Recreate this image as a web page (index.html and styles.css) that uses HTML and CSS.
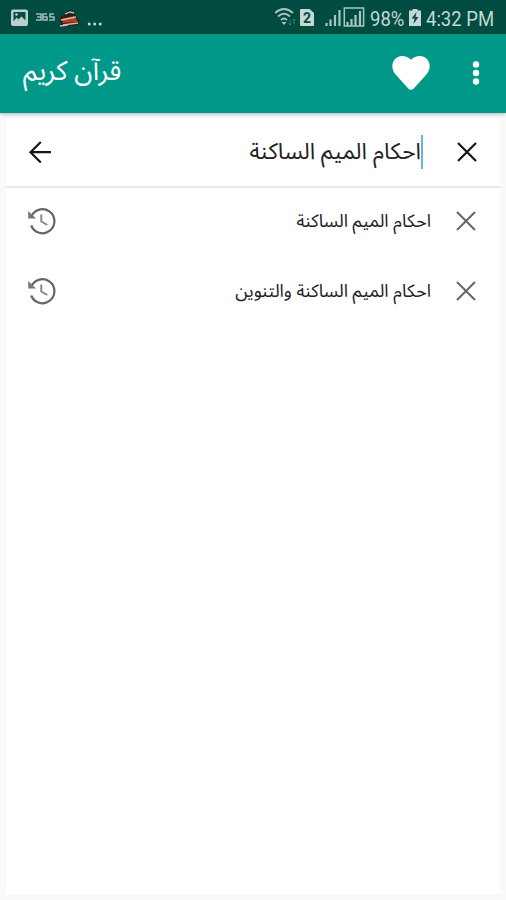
FILE: index.html
```html
<!DOCTYPE html>
<html lang="ar">
<head>
    <meta charset="utf-8">
    <title>قرآن كريم</title>
    <link rel="stylesheet" href="styles.css">
</head>
<body>
    <div class="status-bar">
        <svg class="status-left" width="70" height="34" viewBox="0 0 70 34">
            <!-- picture -->
            <rect x="11" y="9.500" width="17" height="16.500" rx="2" fill="#b9d0cb"/>
            <path d="M13.500 12h12v8.500l-4-4-3 3-2-2-3 4z" fill="#064c40"/>
            <circle cx="16.500" cy="14.500" r="1.300" fill="#b9d0cb"/>
            <!-- 365 badge -->
            <path d="M36 14h5v6h-5M37 17h4M47 14h-4v6h4v-3h-4M54 14h-4v3h4v3h-5" fill="none" stroke="#9db9b3" stroke-width="1.600"/>
        </svg>
        <svg class="cake" width="22" height="34" viewBox="0 0 22 34">
            <path d="M1 17l7-4 2-3 4 1 6 10-1 4-17 2z" fill="#311c18"/>
            <path d="M3 19l12-3 4 6-15 1z" fill="#a5432f"/>
            <path d="M2 20l15-3M4 25l15-2" stroke="#e9b48c" stroke-width="1.500"/>
            <path d="M6 14l5-2 4 1M1 26l8-1" stroke="#c9c0b4" stroke-width="1.300" fill="none"/>
        </svg>
        <svg width="16" height="34" viewBox="0 0 16 34" fill="#c5d8d4">
            <circle cx="2.200" cy="24" r="1.500"/>
            <circle cx="7.700" cy="24" r="1.500"/>
            <circle cx="13.200" cy="24" r="1.500"/>
        </svg>
        <svg class="status-right" width="92" height="34" viewBox="0 0 92 34">
            <!-- wifi -->
            <g fill="none" stroke="#a9c6bf" stroke-width="1.800">
                <path d="M0 13q9-8 18 0M3 16.500q6-5.500 12 0M6 20q3-3 6 0"/>
            </g>
            <path d="M6.500 22h5L9 25z" fill="#a9c6bf"/>
            <path d="M15 20v5M13.500 23.500l1.500 1.500 1.500-1.500M19 24v-5M17.500 20.500l1.500-1.500 1.500 1.500" fill="none" stroke="#47796e"/>
            <!-- sim card -->
            <path d="M26 9h8.500l4.500 4v12q0 1-1 1H26q-1 0-1-1V10q0-1 1-1z" fill="#c5d8d4"/>
            <text class="sim" x="32" y="22.500">2</text>
            <!-- signal bars -->
            <path d="M51.500 23v3M55.500 19.500V26M60 15v11M64.500 10v16" stroke="#a9c6bf" stroke-width="2.200"/>
            <rect x="69.300" y="8" width="19.300" height="18" fill="none" stroke="#a9c6bf" stroke-width="1.500"/>
            <path d="M72.500 22v4M76.500 19v7M80.500 15v11M85 11v15" stroke="#a9c6bf" stroke-width="2.200"/>
        </svg>
        <span class="percent">98%</span>
        <svg class="battery" width="12" height="34" viewBox="0 0 12 34">
            <path d="M3.500 9h5v1.500H12V26H0V10.500h3.500z" fill="#c5d8d4"/>
            <path d="M7.500 12L2.500 18.500h3L4.500 24l5-7h-3z" fill="#064c40"/>
        </svg>
        <span class="time">4:32 PM</span>
    </div>

    <div class="toolbar">
        <h1 class="title" dir="rtl">قرآن كريم</h1>
        <svg class="heart" width="38" height="34" viewBox="0 0 38 34" fill="#fff">
            <path d="M19 3.800C13-2 5-.5 1.600 5-1 10 .4 15 4 19l12.500 13.700q2.500 2.300 5 0L34 19c3.600-4 5-9 2.400-14C33-.5 25-2 19 3.800z"/>
        </svg>
        <svg class="more" width="8" height="26" viewBox="0 0 8 26" fill="#fff">
            <circle cx="4" cy="4.500" r="3.200"/>
            <circle cx="4" cy="13" r="3.200"/>
            <circle cx="4" cy="21.500" r="3.200"/>
        </svg>
    </div>

    <div class="search-panel">
        <div class="search-row">
            <svg class="back" width="24" height="24" viewBox="0 0 24 24">
                <path d="M12.800 2L2.500 12.200 12.800 22.500M2.500 12.200H23" fill="none" stroke="#151515" stroke-width="2.200"/>
            </svg>
            <span class="query" dir="rtl">احكام الميم الساكنة</span>
            <svg class="clear" width="20" height="20" viewBox="0 0 20 20">
                <path d="M1 1l18 18M19 1L1 19" stroke="#151515" stroke-width="2.200"/>
            </svg>
        </div>
        <div class="history-row">
            <svg class="history" width="30" height="28" viewBox="0 0 30 28">
                <path d="M4 10.500A12 12 0 1 1 4.200 18.500" fill="none" stroke="#666" stroke-width="2.200"/>
                <path d="M1.200 4V11.500H9z" fill="#777"/>
                <path d="M14.300 7.500v7l6 3.500" fill="none" stroke="#888" stroke-width="2"/>
            </svg>
            <span class="suggestion" dir="rtl">احكام الميم الساكنة</span>
            <svg class="remove" width="20" height="20" viewBox="0 0 20 20">
                <path d="M1 1l18 18M19 1L1 19" stroke="#666" stroke-width="2"/>
            </svg>
        </div>
        <div class="history-row">
            <svg class="history" width="30" height="28" viewBox="0 0 30 28">
                <path d="M4 10.500A12 12 0 1 1 4.200 18.500" fill="none" stroke="#666" stroke-width="2.200"/>
                <path d="M1.200 4V11.500H9z" fill="#777"/>
                <path d="M14.300 7.500v7l6 3.500" fill="none" stroke="#888" stroke-width="2"/>
            </svg>
            <span class="suggestion" dir="rtl">احكام الميم الساكنة والتنوين</span>
            <svg class="remove" width="20" height="20" viewBox="0 0 20 20">
                <path d="M1 1l18 18M19 1L1 19" stroke="#666" stroke-width="2"/>
            </svg>
        </div>
    </div>
</body>
</html>
```

FILE: styles.css
```css
* {
    box-sizing: border-box;
}
body {
    margin: 0;
    height: 900px;
    overflow: hidden;
    display: flex;
    flex-direction: column;
    background-color: #fafafa;
    font-family: "Noto Sans Arabic", "DejaVu Sans", sans-serif;
}
svg {
    display: block;
    flex: none;
}
.status-bar {
    display: flex;
    align-items: center;
    flex: none;
    height: 34px;
    background-color: #004c40;
    color: #c5d8d4;
    font-family: Roboto, sans-serif;
    font-size: 21px;
    white-space: nowrap;
}
.status-left {
    margin-right: -11px;
}
.cake {
    margin-right: 6px;
}
.status-right {
    margin-left: 172px;
}
.sim {
    font-size: 14px;
    font-weight: bold;
    text-anchor: middle;
    fill: #064c40;
}
.percent,
.time {
    transform: scaleX(0.88);
    transform-origin: left;
    padding-top: 3px;
}
.percent {
    width: 34px;
    margin-left: 3px;
}
.battery {
    margin: 0 5px 0 5px;
}
.time {
    width: 68px;
}
.toolbar {
    position: relative;
    display: flex;
    align-items: center;
    flex: none;
    height: 79px;
    padding: 0 26px 1px 23px;
    background-color: #009888;
    box-shadow: 0 1px 4px rgba(0, 0, 0, 0.3);
    color: #fff;
}
.title {
    flex: 1;
    margin: 0;
    padding-bottom: 2px;
    font-size: 27px;
    font-weight: normal;
    line-height: 40px;
    text-align: left;
}
.heart {
    margin-right: 42px;
}
.search-panel {
    flex: 1;
    margin: 5px 5px 5px 6px;
    background-color: #fff;
    box-shadow: 0 0 2px rgba(0, 0, 0, 0.05);
}
.search-row,
.history-row {
    display: flex;
    align-items: center;
}
.search-row {
    height: 70px;
    padding: 0 24px 0 22px;
    border-bottom: 2px solid #e9e9e9;
}
.query {
    margin-left: auto;
    margin-right: 34px;
    border-right: 2px solid #65b5dc;
    color: #222;
    font-size: 22.8px;
    line-height: 34px;
}
.history-row {
    height: 70px;
    padding: 0 25px 4px 21px;
}
.suggestion {
    margin-left: auto;
    margin-right: 25px;
    color: #222;
    font-size: 17.9px;
}
```
